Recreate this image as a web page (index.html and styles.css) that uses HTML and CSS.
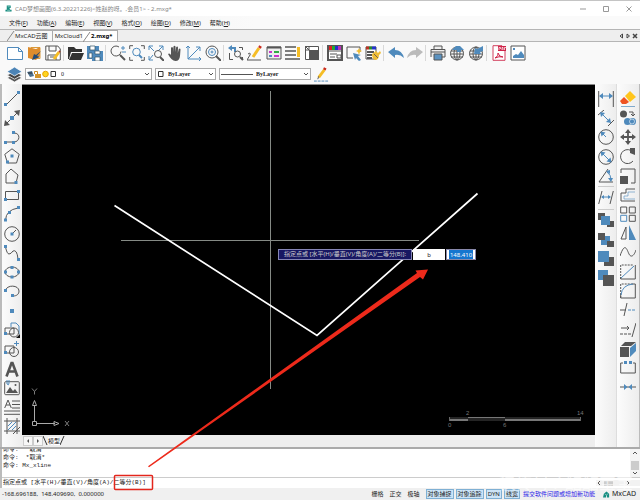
FILE: index.html
```html
<!DOCTYPE html>
<html lang="zh-CN">
<head>
<meta charset="utf-8">
<title>CAD梦想画图</title>
<link rel="stylesheet" href="styles.css">
</head>
<body>
<header class="titlebar">
  <svg class="logo" viewBox="0 0 16 16"><path class="tf" d="M4 1h9v6h-3l2 4h3v4H1v-4h3z"/><path class="w" d="M6 4h5M5 12h7"/></svg>
  <h1>CAD梦想画图(6.3.20221226)&lt;姓赵的呀。,会员1&gt; - 2.mxg*</h1>
  <div class="window-buttons">
    <button aria-label="最小化"><svg viewBox="0 0 8 8"><path d="M1 4h6"/></svg></button>
    <button aria-label="最大化"><svg viewBox="0 0 8 8"><path d="M1.5 1.5h5v5h-5z"/></svg></button>
    <button aria-label="关闭"><svg viewBox="0 0 8 8"><path d="M1.5 1.5l5 5M6.500 1.500l-5 5"/></svg></button>
  </div>
</header>
<nav class="menubar">
  <button>文件(<u>F</u>)</button><button>功能(<u>A</u>)</button><button>编辑(<u>E</u>)</button><button>视图(<u>V</u>)</button><button>格式(<u>O</u>)</button><button>绘图(<u>D</u>)</button><button>修改(<u>M</u>)</button><button>帮助(<u>H</u>)</button>
</nav>
<div class="doc-tabs">
  <svg class="slant" viewBox="0 0 8 11"><path d="M0 11L7 1"/></svg>
  <button class="doc-tab">MxCAD云图</button>
  <button class="doc-tab second">MxCloud1</button>
  <button class="doc-tab active"><svg class="slant" viewBox="0 0 8 11"><path d="M0 11L7 1"/></svg>2.mxg*</button>
  <div class="tab-nav">
    <button aria-label="向左"><svg viewBox="0 0 6 6"><path d="M4.500 1v4L2 3z"/></svg></button>
    <button aria-label="向右"><svg viewBox="0 0 6 6"><path d="M2 1v4l2.500-2z"/></svg></button>
    <button aria-label="关闭标签"><svg viewBox="0 0 6 6"><path class="heavy" d="M1 1l4 4M5 1L1 5"/></svg></button>
  </div>
</div>
<div class="toolbar main-tools">
  <button aria-label="新建"><svg viewBox="0 0 16 16"><path class="b" fill="#fff" d="M.5 2.500h11l4 4v8H.5zM11.500 2.500v4h4"/></svg></button>
  <button aria-label="打开图纸"><svg viewBox="0 0 16 16"><path fill="#fff" stroke="#d99a3a" d="M5 2.500h9v11H5z"/><path class="of" d="M2 2l8 2v11l-8-2zM10 4l4-2v9l-4 4z"/><path class="nf" d="M15 6l-4 5 3 1-8 3 2-6 2 1z"/></svg></button>
  <button aria-label="保存"><svg viewBox="0 0 16 16"><path fill="#fff" d="M.8 1h12l2.500 3v11H.8zM4 1v5h7V1M3 15v-5h8v5M5 12h4"/><path class="yl" d="M9 14l5-7"/><path stroke="#b93b24" stroke-width="2" d="M14 7l1-1"/></svg></button>
  <i class="sep"></i>
  <button aria-label="打开"><svg viewBox="0 0 16 16"><path class="kf" d="M0 2h6l2 2h6v3H3l-2 7H0zM4 8h12l-3 7H1z"/></svg></button>
  <button aria-label="另存为"><svg viewBox="0 0 16 16"><path class="bf" d="M0 1h12v13H0zM5 6h11v10H5z"/><path fill="#fff" d="M3 1h5v4H3zM2 8h3v5H2zM8 6h5v3H8zM8 12h5v4H8z" stroke="#356" stroke-width=".7"/></svg></button>
  <i class="sep"></i>
  <button aria-label="实时缩放"><svg viewBox="0 0 16 16"><path d="M9 2A5 5 0 1 0 11 6.500"/><path class="hv" d="M10 10l5 5"/><path class="b" d="M11 3h4M13 1v4M12 7h4"/></svg></button>
  <button aria-label="窗口缩放"><svg viewBox="0 0 16 16"><path d="M.7 4V.7H4M12 .7h3.300V4M.7 12v3.300H4M12 15.300h3.300V12"/><circle class="b" cx="7.500" cy="7" r="3.800"/><path class="b hv" d="M10 10l3 3"/></svg></button>
  <button aria-label="范围缩放"><svg viewBox="0 0 16 16"><path class="b" d="M6 6L1 1M1 5V1h4M10 6l5-5M11 1h4v4M5 10l-4 5M1 11v4h4"/><circle cx="10" cy="9" r="3.500"/><path class="hv" d="M12 12l4 4"/></svg></button>
  <button aria-label="平移"><svg viewBox="0 0 16 16"><path fill="#555" stroke="none" d="M4 8V3q1-2 2 0v4l.5-5.500q1-1.500 2 0V7l.7-5q1.500-1 1.800.5L10.800 8l1-4q1.500-1 1.700.6L13 11q-.5 5-4.500 5T1 9q1.500-1.500 3 1z"/></svg></button>
  <button aria-label="坐标系"><svg viewBox="0 0 16 16"><path class="b" d="M2 1v13h13M2 14L14 2M0 3l2-2 2 2M13 12l2 2-2 2M10 2h4v4"/></svg></button>
  <button aria-label="全图缩放"><svg viewBox="0 0 16 16"><circle cx="7" cy="7" r="6"/><circle class="b" cx="7" cy="7" r="3.500"/><circle class="b" cx="7" cy="7" r="1"/><path class="hv" d="M11 11l5 5"/></svg></button>
  <i class="sep"></i>
  <button aria-label="返回缩放"><svg viewBox="0 0 16 16"><path class="bf" d="M0 3l4-3v2h4v5H6V4H4v2z"/><path d="M1.500 8v6.500H5M11 2.500h3.500V5M14.500 12v3"/><circle cx="9.500" cy="9" r="3"/><path class="hv" d="M12 12l3 3"/></svg></button>
  <button aria-label="编辑"><svg viewBox="0 0 16 16"><path d="M1 9q3-2 2 1l-3 5h14"/><path class="yl" d="M6 12l6-9"/><path class="rd" d="M12.500 3l1-2"/></svg></button>
  <button aria-label="属性"><svg viewBox="0 0 16 16"><path fill="#eee" d="M1 2h14v12H1z"/><path class="hv" d="M1 2.500h14"/><path stroke="#c3c" stroke-width="2" d="M3 7h3"/><path class="b hv" d="M3 11h3"/><path stroke="#3a4" stroke-width="2" d="M8 7h5"/><path stroke="#c3c" stroke-width="2" d="M8 11h5"/></svg></button>
  <button aria-label="图层列表"><svg viewBox="0 0 16 16"><path stroke-width="1.600" d="M0 2h11M0 6h11M0 10h11M0 14h15"/><path class="yl" d="M13.500 2v10"/></svg></button>
  <button aria-label="块"><svg viewBox="0 0 16 16"><path fill="#fff" d="M1.500 1.500h13v13h-13z"/><path class="df" d="M5 5h10v10H5z"/><path d="M1 1l4 4M5 1v4M1 5h4"/></svg></button>
  <i class="sep"></i>
  <button aria-label="颜色表"><svg viewBox="0 0 16 16"><path fill="#fff" class="hv" d="M1 1h14v14H1z"/><path stroke="#d22" stroke-width="4" d="M2 3h3"/><path stroke="#2a3" stroke-width="4" d="M5 3h3"/><path stroke="#23c" stroke-width="4" d="M8 3h3"/><path stroke="#b3b" stroke-width="4" d="M11 3h3"/><path d="M1 6h14M3 9h7M3 12h5M10 10h4v3h-4z"/></svg></button>
  <button aria-label="快速选择"><svg viewBox="0 0 16 16"><path d="M7 13H1V2h13v5"/><path class="bf" d="M7 8l8 2-3 1 3 4-2 1-3-3-1 2z"/><path class="yf" d="M13 3l1 2 2 1-2 1-1 3-1-3-2-1 2-1z"/></svg></button>
  <button aria-label="格式刷"><svg viewBox="0 0 16 16"><path fill="#fff" d="M1 2h10v12H1z"/><path stroke="#b32" stroke-width="3" d="M1 3h3"/><path stroke="#283" stroke-width="3" d="M4 3h3"/><path stroke="#23c" stroke-width="3" d="M7 3h4"/><path class="hv" d="M2 7h7M2 10h5M2 13h5"/><path class="yf" d="M7 9l4-3 2 2 2-2 1 2-2 2q0 5-4 5-3-1-3-6z"/><path stroke="#765" d="M9 9l4 4"/></svg></button>
  <i class="sep"></i>
  <button aria-label="撤销"><svg viewBox="0 0 16 16"><path class="bf" d="M0 7l7-5v3q7 0 9 8-4-4-9-3v3z"/></svg></button>
  <button aria-label="重做"><svg viewBox="0 0 16 16"><path fill="#bbb" stroke="none" d="M16 7L9 2v3q-7 0-9 8 4-4 9-3v3z"/></svg></button>
  <i class="sep"></i>
  <button aria-label="打印"><svg viewBox="0 0 16 16"><path fill="#eee" d="M4 4V1h8v3M1 12V4.500h14V12h-3M1 7h14"/><path fill="#5b92c0" d="M4 9h8v6H4z"/></svg></button>
  <button aria-label="上传"><svg viewBox="0 0 16 16"><circle cx="8" cy="8.500" r="6.500"/><ellipse cx="8" cy="8.500" rx="3" ry="6.500"/><path d="M8 2v13M2 6h12M1.500 9h13M2 12h12"/><path class="bf" d="M3 5l4-4h4l4 4h-3v2H8V5z"/></svg></button>
  <button aria-label="网络下载"><svg viewBox="0 0 16 16"><circle cx="8" cy="8.500" r="6.500"/><ellipse cx="8" cy="8.500" rx="3" ry="6.500"/><path d="M8 2v13M2 6h12M1.500 9h13M2 12h12"/><path class="bf" d="M15 1v5l-3 1 1 2H6l1-6 2 1z"/></svg></button>
  <i class="sep"></i>
  <button aria-label="导出 PDF"><svg viewBox="0 0 16 16"><path fill="#fff" stroke="#d2405e" d="M2 .7h9l3 3v11.600H2z"/><path fill="#cf2248" stroke="none" d="M7 1h8v5H7z"/><path stroke="#fff" stroke-width=".7" d="M8 5V2.500h1.500V4M11 5V2.500h1V5M13.500 5V2.500H15"/><path stroke="#cf2248" d="M4 13q4-2 3-5 1 4 5 4-4-1-8 1"/></svg></button>
  <button aria-label="导出图片"><svg viewBox="0 0 16 16"><path fill="#fff" d="M1 1h14v14H1z"/><path class="bf" d="M3 13v-2l3-2 2 1 3-4 3 4v3zM3 3h2v2H3z"/></svg></button>
</div>
<div class="toolbar layer-tools">
  <button class="layers" aria-label="图层"><svg viewBox="0 0 16 16"><path fill="#555" stroke="#fff" stroke-width=".8" d="M0 11.500L8 8l8 3.500L8 16z"/><path fill="#444" stroke="#fff" stroke-width=".8" d="M0 8.500L8 5l8 3.500L8 13z"/><path fill="#4c84b6" stroke="#fff" stroke-width=".8" d="M0 5l8-5 8 5-8 4.500z"/></svg></button>
  <div class="combo layer-combo">
    <svg class="states" viewBox="0 0 30 8"><path fill="#4d7393" stroke="none" d="M0 2l5-1 2 5-4 1z"/><path stroke="#333" d="M1 3h4"/><path fill="#d5962c" stroke="none" d="M8 4h6v4H8z"/><path stroke="#c98b25" d="M7.500 4V1.500h3V4"/><circle cx="18.500" cy="4" r="2.800" fill="#ffd51e" stroke="#e9a500"/><path fill="#fff" stroke="#333" d="M24 1.500h4.500v5H24z"/></svg>
    <select aria-label="图层"><option>0</option></select>
    <svg class="chev" viewBox="0 0 6 6"><path d="M1 2l2 2 2-2"/></svg>
  </div>
  <div class="combo color-combo">
    <svg class="swatch" viewBox="0 0 8 8"><path fill="#fff" stroke="#333" d="M1.500 1.500h4.500v5H1.500z"/></svg>
    <select aria-label="颜色"><option>ByLayer</option></select>
    <svg class="chev" viewBox="0 0 6 6"><path d="M1 2l2 2 2-2"/></svg>
  </div>
  <div class="combo line-combo">
    <span class="sample"></span>
    <select aria-label="线型"><option>ByLayer</option></select>
    <svg class="chev" viewBox="0 0 6 6"><path d="M1 2l2 2 2-2"/></svg>
  </div>
  <button aria-label="线型编辑"><svg viewBox="0 0 16 16"><path class="yl" d="M5 11l6-8"/><path class="rd" d="M11 3l1-2"/><path d="M4 13l1-3"/><path class="b" stroke-dasharray="3 1" d="M0 15h16"/></svg></button>
</div>
<main class="work">
  <div class="side draw-tools">
    <button aria-label="直线"><svg viewBox="0 0 16 16"><path d="M2 14L14 2"/><path class="bf" d="M0 12h3v3H0zM13 0h3v3h-3z"/></svg></button>
    <button aria-label="构造线"><svg viewBox="0 0 16 16"><path d="M2 14L14 2"/><path class="df" d="M0 16l1-6 5 5zM16 0l-6 1 5 5z"/><path class="bf" d="M6 6h4v4H6z"/></svg></button>
    <button aria-label="多段线"><svg viewBox="0 0 16 16"><path d="M1 13h9c6 0 7-9 0-9"/><path class="bf" d="M0 12h3v3H0zM8 12h3v3H8zM8 2h3v3H8z"/></svg></button>
    <button aria-label="正多边形"><svg viewBox="0 0 16 16"><path d="M8 .8l7.200 5.500L12.500 15h-9L.8 6.300z"/><path class="bf" d="M6.500 6.500h3v3h-3zM2 12.500h3v3H2z"/></svg></button>
    <button aria-label="多边形"><svg viewBox="0 0 16 16"><path d="M2 15V6l5-5 7 6-2 8z"/><path class="bf" d="M10.500 13h3v3h-3z"/></svg></button>
    <button aria-label="矩形"><svg viewBox="0 0 16 16"><path d="M1.500 4.500h13v8h-13z"/><path class="bf" d="M0 11h3v3H0zM13 3h3v3h-3z"/></svg></button>
    <button aria-label="圆弧"><svg viewBox="0 0 16 16"><path d="M1.500 14Q2 4 14 2"/><path class="bf" d="M0 12.500h3v3H0zM13 0h3v3h-3zM4 5h3v3H4z"/></svg></button>
    <button aria-label="圆"><svg viewBox="0 0 16 16"><circle cx="8" cy="8" r="7.300"/><path d="M8 8l4-4"/><path class="bf" d="M6.500 6.500h3v3h-3z"/></svg></button>
    <button aria-label="样条曲线"><svg viewBox="0 0 16 16"><path d="M1.500 2Q3 9 5 9t4-3q4-2 5 8"/><path class="bf" d="M0 0h3v3H0zM13 13h3v3h-3z"/></svg></button>
    <button aria-label="椭圆"><svg viewBox="0 0 16 16"><ellipse cx="8" cy="8" rx="7" ry="5"/><path class="bf" d="M0 6.500h3v3H0zM13 6.500h3v3h-3zM6.500 2h3v3h-3zM6.500 11.500h3v3h-3z"/></svg></button>
    <button aria-label="椭圆弧"><svg viewBox="0 0 16 16"><path d="M1 8c2-7 14-6 14 0 0 3-2 5-6 5"/><path class="bf" d="M0 6h3v3H0zM7 11h3v3H7z"/></svg></button>
    <button aria-label="点"><svg viewBox="0 0 16 16"><path class="bf" d="M6 6h4v4H6z"/></svg></button>
    <button aria-label="创建块"><svg viewBox="0 0 16 16"><path class="b" d="M7 5V1h5l3 3v8"/><path d="M1 6h9v6H1z"/><circle cx="10" cy="10.500" r="4.500"/><path class="bf" d="M0 10h3v3H0z"/><path fill="#111" stroke="none" d="M16 12v4h-4z"/></svg></button>
    <button aria-label="插入块"><svg viewBox="0 0 16 16"><path d="M1 5h9v7H1z"/><circle cx="10" cy="11" r="4.500"/><path class="b" d="M12.500 0v5M10 2.500h5"/><path class="bf" d="M0 10h3v3H0z"/></svg></button>
    <button aria-label="单行文字"><svg viewBox="0 0 16 16"><path stroke-width="2.600" d="M2.500 15.500L7.500 2h1l5 13.500M4.500 10.500h7"/></svg></button>
    <button aria-label="图片"><svg viewBox="0 0 16 16"><rect x=".7" y="1.700" width="14.600" height="13" rx="1"/><path class="df" d="M2 13l4-6 3 4 2-2 3 4z"/><circle class="df" cx="11.500" cy="5" r="1"/><path class="b" d="M3 0v4q2 2 2-1V0"/></svg></button>
    <button aria-label="多行文字"><svg viewBox="0 0 16 16"><path d="M.7 9L4 1l3.300 8M2 6h4M8 2h8M8 5.500h8M8 9h8M0 12h16M0 15.300h16"/></svg></button>
    <button aria-label="图案填充"><svg viewBox="0 0 16 16"><path d="M3 0v16M13 0v16M0 3h16M0 13h16"/><path class="b" d="M4 8l4-4M4 12l8-8M8 12l4-4"/><path d="M9 16l7-7"/></svg></button>
  </div>
  <section class="drawing">
    <div class="canvas">
      <svg class="scene" viewBox="22 85 573 350">
        <path stroke="#858a85" d="M270.500 91v298M121 240.500h298"/>
        <path stroke="#fff" stroke-width="1.700" d="M114.500 205.500L317 335.500 477.500 193.500"/>
        <path stroke="#aaa" d="M32.500 421.500h4v4h-4zM34.500 421V405M37 423.500h18M32.500 405.500l2-5 2 5zM54 421.500l5 2-5 2z"/>
        <path stroke="#999" stroke-width=".8" d="M32 388.500l2.500 3 2.500-3M34.500 391.500v3M65 421l4 5M69 421l-4 5"/>
        <path fill="#242424" stroke="none" d="M449 417h131v4H449z"/>
        <path fill="#777" stroke="none" d="M449 419h19v2h-19zM505 419h75v2h-75zM468 417h37v1h-37z"/>
        <path stroke="#666" d="M449.500 417v4M580.500 417v4"/>
        <g class="scale-text"><text x="466" y="415">2</text><text x="577" y="415">14</text><text x="448" y="427">0</text><text x="503" y="427">6</text></g>
      </svg>
      <div class="dyn">
        <label for="dyn-a">指定点或 [水平(H)/垂直(V)/角度(A)/二等分(B)]:</label>
        <input id="dyn-a" value="b">
        <span class="dyn-b"><input aria-label="坐标值" value="148.410"></span>
      </div>
    </div>
    <div class="model-tabs">
      <button aria-label="上一个"><svg viewBox="0 0 6 6"><path d="M4 1v4L2 3z"/></svg></button>
      <button aria-label="下一个"><svg viewBox="0 0 6 6"><path d="M2 1v4l2-2z"/></svg></button>
      <svg class="edge" viewBox="0 0 5 10"><path d="M0 0l4 9"/></svg>
      <button class="model">模型</button>
      <svg class="edge" viewBox="0 0 5 10"><path d="M4 0L0 9"/></svg>
    </div>
  </section>
  <div class="side dim-tools">
    <button aria-label="线性标注"><svg viewBox="0 0 16 16"><path d="M.7 0v16M15.300 0v16"/><path class="b" d="M2 5h12"/><path class="bf" d="M1 5l4-3v6zM15 5l-4-3v6z"/></svg></button>
    <button aria-label="对齐标注"><svg viewBox="0 0 16 16"><path d="M0 5l6-5M10 16l6-6"/><path class="b" d="M4 4l8 8"/><path class="bf" d="M2 2l5 1-4 4zM13 13l-5-1 4-4z"/></svg></button>
    <button aria-label="半径标注"><svg viewBox="0 0 16 16"><circle cx="8" cy="8" r="7.300"/><path class="b" d="M4 4l4 4"/><path class="bf" d="M2.500 2.500l5 1-4 4z"/></svg></button>
    <button aria-label="直径标注"><svg viewBox="0 0 16 16"><circle cx="8" cy="8" r="7.300"/><path class="b" d="M4 4l8 8"/><path class="bf" d="M2.500 2.500l5 1-4 4zM13.500 13.500l-5-1 4-4z"/></svg></button>
    <button aria-label="角度标注"><svg viewBox="0 0 16 16"><path d="M10 1L1 14h14"/><path class="b" d="M9 4q4 3 4 7"/><path class="bf" d="M8 3l4-1v4zM13 14l-3-4h5z"/></svg></button>
    <i class="rule"></i>
    <button aria-label="倾斜标注"><svg viewBox="0 0 16 16"><path d="M4 1L.7 14M15.300 1L12 14"/><path class="b" d="M4 7h8"/><path class="bf" d="M3 7l3-2v4zM13 7l-3-2v4z"/></svg></button>
    <i class="rule"></i>
    <button aria-label="置于顶层"><svg viewBox="0 0 16 16"><path class="df" d="M0 1h7v7H0zM9 9h7v6H9z"/><path class="bf" d="M3 4h9v9H3z"/></svg></button>
    <button aria-label="置于底层"><svg viewBox="0 0 16 16"><path class="bf" d="M3 4h9v9H3z"/><path class="df" d="M0 1h7v7H0zM9 9h7v6H9z"/></svg></button>
    <button aria-label="前移"><svg viewBox="0 0 16 16"><path class="df" d="M6 6h10v9H6z"/><path class="bf" stroke="#fff" d="M0 0h11v11H0z"/></svg></button>
    <button aria-label="后移"><svg viewBox="0 0 16 16"><path class="bf" d="M0 0h10v10H0z"/><path class="df" stroke="#fff" d="M5 5h11v11H5z"/></svg></button>
  </div>
  <div class="side edit-tools">
    <button aria-label="删除"><svg viewBox="0 0 16 16"><path fill="#ffc51c" stroke="none" d="M10 0l6 6-6 5-5-6z"/><path fill="#ef5423" stroke="none" d="M4 6l5 5-3 2H2L0 10z"/><path class="b" stroke-width=".7" d="M1 15.500h14"/></svg></button>
    <button aria-label="复制"><svg viewBox="0 0 16 16"><circle class="df" cx="3.500" cy="4" r="3.500"/><circle class="bf" cx="7.500" cy="11.500" r="3.500"/><circle class="bf" cx="12.500" cy="11.500" r="3.500"/><circle class="w" cx="12" cy="11.500" r="2.500" stroke-width=".6"/><path d="M9 2h4v4M11 4l2 2 2-2"/></svg></button>
    <button aria-label="移动"><svg viewBox="0 0 16 16"><path stroke-width="1.800" d="M8 2v12M2 8h12"/><path class="df" d="M8 0l3 4H5zM8 16l3-4H5zM0 8l4-3v6zM16 8l-4-3v6z"/></svg></button>
    <button aria-label="旋转"><svg viewBox="0 0 16 16"><path d="M13 13A7 7 0 1 1 11 2.500"/><path class="df" d="M10 0h5v7l-5-2z"/></svg></button>
    <button aria-label="缩放"><svg viewBox="0 0 16 16"><path d="M1 5V1h14v14h-4"/><path class="df" d="M0 8h8v8H0z"/></svg></button>
    <button aria-label="偏移"><svg viewBox="0 0 16 16"><path d="M15 2H6v4H1v8h14"/><path class="b" stroke-width=".6" d="M15 5H8v4H4v3h11"/></svg></button>
    <button aria-label="阵列"><svg viewBox="0 0 16 16"><path d="M.7 1h6v6h-6zM9.300 1h6v6h-6zM9.300 9.300h6v6h-6z"/><path class="b" d="M.7 9.300h6v6h-6z"/></svg></button>
    <button aria-label="镜像"><svg viewBox="0 0 16 16"><path d="M6 2v12H1z"/><path class="bf" d="M9 0v15h7z"/></svg></button>
    <button aria-label="曲线编辑"><svg viewBox="0 0 16 16"><path d="M0 11C5-4 7 5 9 9s5 2 7-4"/></svg></button>
    <button aria-label="倒角"><svg viewBox="0 0 16 16"><path stroke-dasharray="2 1" d="M.7 15V1h13"/><path d="M.7 13v2h14.600V1"/><path class="b" d="M1 14L14 2"/></svg></button>
    <button aria-label="圆角"><svg viewBox="0 0 16 16"><path stroke-dasharray="2 1" d="M.7 15V1h13"/><path d="M.7 11v4h14.600V1h-3"/><path class="b" d="M1 12Q2 2 13 1"/></svg></button>
    <button aria-label="修剪"><svg viewBox="0 0 16 16"><path d="M0 8h6M7 1L4 14"/><path class="b" stroke-dasharray="3 1" d="M8 8h8"/></svg></button>
    <button aria-label="延伸"><svg viewBox="0 0 16 16"><path d="M1 6h8M7 4l2 2-2 2M16 1l-4 14"/><path stroke-dasharray="3 1" d="M0 12h11"/></svg></button>
    <button aria-label="拉伸"><svg viewBox="0 0 16 16"><path class="df" d="M0 6h9v10H0zM1 5l4-4h11l-5 4z"/><path class="bf" d="M10 7l6-5v8l-6 6z"/></svg></button>
    <button aria-label="打断"><svg viewBox="0 0 16 16"><path d="M3 3H.7v10h14.600V3H13"/><path class="bf" d="M4 1h3v3H4zM9 1h3v3H9z"/></svg></button>
    <button aria-label="合并"><svg viewBox="0 0 16 16"><path d="M0 8h16"/><path class="bf" d="M7.500 8L4 5v6zM8.500 8L12 5v6z"/></svg></button>
  </div>
</main>
<section class="console">
  <div class="log">
    <div class="log-text"><p>命令:  *取消*</p><p>命令:  *取消*</p><p>命令: Mx_xline</p></div>
    <div class="vscroll"><svg viewBox="0 0 6 6"><path d="M1 4l2-2 2 2"/></svg><i></i><svg viewBox="0 0 6 6"><path d="M1 2l2 2 2-2"/></svg></div>
  </div>
  <div class="prompt">
    <label for="command">指定点或 [水平(H)/垂直(V)/角度(A)/二等分(B)]</label>
    <input id="command">
    <div class="hscroll"><svg viewBox="0 0 6 6"><path d="M4 1L2 3l2 2"/></svg><i></i><svg viewBox="0 0 6 6"><path d="M2 1l2 2-2 2"/></svg></div>
  </div>
</section>
<footer class="status">
  <span class="coords">-168.696188,&nbsp; 148.409690,&nbsp; 0.000000</span>
  <button>栅格</button><button>正交</button><button>极轴</button>
  <div class="toggles"><button>对象捕捉</button><button>对象追踪</button><button>DYN</button><button>线宽</button></div>
  <a href="#">提交软件问题或增加新功能</a>
  <svg class="logo" viewBox="0 0 16 16"><path class="tf" d="M2 6l6-5 6 5v9H9v-5H7v5H0z"/><path class="w" d="M4 7l4 2 4-3"/></svg>
  <span class="brand">MxCAD</span>
</footer>
<div class="watermark">快传号 / 酷酷宝宝</div>
<svg class="annotation" viewBox="0 0 640 500" aria-hidden="true">
  <path fill="#ed2a1b" d="M148 466.300L417 273 415.500 270.500 428 269.500 423 279.500 420 277 149 467.300z"/>
  <rect x="114.500" y="475.500" width="38" height="14" rx="1" fill="none" stroke="#e3261c" stroke-width="1.500"/>
</svg>
</body>
</html>
```
FILE: styles.css
```css
* { box-sizing: border-box; }

body {
  margin: 0;
  min-height: 100vh;
  display: flex;
  flex-direction: column;
  position: relative;
  overflow: hidden;
  background: #f9f9f9;
  border-top: 1px solid #c4c4c4;
  color: #222;
  font: 6px/8px "Noto Sans", "Noto Sans CJK SC", sans-serif;
}

button, input, select {
  margin: 0;
  padding: 0;
  border: 0;
  background: none;
  color: inherit;
  font: inherit;
}

svg { display: block; fill: none; stroke: #555; stroke-width: 1; }
h1, p { margin: 0; font: inherit; }

.b { stroke: #4f8abc; }
.bf { fill: #4f8abc; stroke: none; }
.df { fill: #555; stroke: none; }
.kf { fill: #333; stroke: none; }
.of { fill: #dd8c2c; stroke: none; }
.nf { fill: #244b75; stroke: none; }
.yf { fill: #efbd35; stroke: none; }
.tf { fill: #168d80; stroke: none; }
.w { stroke: #fff; }
.hv { stroke-width: 2; }
.yl { stroke: #f5bd25; stroke-width: 3; }
.rd { stroke: #c9291d; stroke-width: 3; }

.titlebar {
  height: 15px;
  display: flex;
  align-items: center;
  padding: 0 5px;
  gap: 3px;
  background: #fff;
  color: #858585;
}
.logo { width: 7px; height: 7px; }
.window-buttons { margin-left: auto; display: flex; gap: 15px; padding-right: 2px; }
.window-buttons svg { width: 8px; height: 8px; stroke: #999; }

.menubar {
  height: 13px;
  display: flex;
  align-items: center;
  gap: 9px;
  padding-left: 9px;
  background: linear-gradient(90deg, #f1f1f1, #fafafa 40%);
}
.menubar button { white-space: nowrap; }

.doc-tabs {
  height: 13px;
  display: flex;
  align-items: flex-end;
  padding: 0 2px 0 7px;
  border-top: 1px solid #b5b5b5;
  border-bottom: 1px solid #b5b5b5;
  background: #eee;
}
.slant { width: 8px; height: 11px; stroke: #888; }
.doc-tab { height: 11px; padding: 0 4px 0 0; border-top: 1px solid #aaa; border-right: 1px solid #aaa; background: #f8f8f8; }
.doc-tab.second { padding: 0 0 0 2px; border-right: 0; }
.doc-tab.active { display: flex; align-items: center; background: #fff; color: #000; font-weight: bold; }
.tab-nav { display: flex; align-self: center; margin-left: auto; gap: 1px; }
.tab-nav svg { width: 6px; height: 6px; stroke: #444; }
.heavy { stroke-width: 1.5; }

.toolbar { display: flex; align-items: center; }
.toolbar svg { flex: none; }
.main-tools { height: 22px; padding-left: 5px; }
.main-tools button { width: 19px; }
.main-tools button svg { width: 16px; height: 16px; margin: 0 auto; }
.sep { flex: none; width: 1px; height: 16px; margin: 0 2px 0 1px; background: #d8d8d8; }
.layer-tools { height: 20px; padding-left: 7px; gap: 3px; }
.layer-tools button svg { width: 15px; height: 15px; }
.combo {
  height: 12px;
  display: flex;
  align-items: center;
  border: 1px solid #aaa;
  background: #fff;
  font: 6px/8px "Liberation Serif", serif;
}
.combo select { flex: 1; min-width: 0; appearance: none; }
.chev { width: 6px; height: 6px; margin-right: 1px; }
.layer-combo { flex: 0 1 127px; }
.color-combo { flex: 0 1 61px; }
.line-combo { flex: 0 1 92px; }
.color-combo select, .line-combo select { font-weight: bold; }
.states { width: 30px; height: 8px; margin: 0 4px 0 1px; }
.swatch { width: 8px; height: 8px; margin: 0 3px 0 1px; }
.sample { width: 32px; height: 1px; margin: 0 3px 0 1px; background: #555; }

.work { flex: 1; min-height: 0; display: flex; border-bottom: 2px solid #aaa; }
.side {
  flex: none;
  width: 22px;
  display: flex;
  flex-direction: column;
  align-items: center;
  padding-top: 5px;
  background: linear-gradient(90deg, #fcfcfc, #ededed);
}
.side button { flex: 1; min-height: 0; display: flex; align-items: center; }
.side svg { width: 16px; height: 16px; }
.draw-tools { padding-bottom: 11px; border-left: 2px solid #bbb; }
.dim-tools { padding-bottom: 159px; border-right: 1px solid #ddd; }
.edit-tools { width: 23px; padding-bottom: 50px; border-right: 1px solid #bbb; }
.rule { width: 16px; height: 1px; margin: 1px 0; background: #ccc; }

.drawing { flex: 1; min-width: 0; display: flex; flex-direction: column; }
.canvas { flex: 1; min-height: 0; position: relative; background: #000; border-top: 1px solid #888; }
.scene { width: 100%; height: 100%; position: absolute; }
.scale-text { fill: #777; stroke: none; font: 6px "Liberation Sans", sans-serif; }
.dyn { position: absolute; left: 256px; top: 164px; display: flex; gap: 1px; color: #ccc; }
.dyn label { height: 11px; padding: 0 5px; border: 1px solid #8585b5; background: #171762; line-height: 9px; white-space: nowrap; }
.dyn > input { width: 32px; height: 11px; background: #fff; color: #222; text-align: center; }
.dyn-b { display: flex; padding: 0 2px; border: 1px solid #88a; background: #fff; }
.dyn-b input { width: 24px; background: #1676cf; color: #fff; text-align: center; }

.model-tabs { height: 12px; display: flex; align-items: center; background: #eee; padding-left: 1px; }
.model-tabs button svg { width: 6px; height: 6px; fill: #555; stroke: none; }
.model-tabs button:not(.model) { padding: 1px; border: 1px solid #ccc; background: #f7f7f7; }
.model-tabs .edge { width: 5px; height: 10px; stroke: #333; }
.model { background: #fff; color: #111; }

.console { background: #fff; border-left: 2px solid #bbb; font-family: "Liberation Mono", "Noto Sans CJK SC", monospace; }
.log { height: 29px; display: flex; border-bottom: 1px solid #ccc; }
.log-text { flex: 1; display: flex; flex-direction: column; justify-content: flex-end; padding: 0 1px 7px; overflow: hidden; white-space: pre; }
.vscroll { width: 10px; display: flex; flex-direction: column; align-items: center; justify-content: space-between; padding: 1px 0; background: #f4f4f4; }
.vscroll svg, .hscroll svg { width: 6px; height: 6px; }
.vscroll i { width: 8px; height: 9px; margin-top: 4px; background: #ccc; }
.prompt { height: 10px; display: flex; align-items: center; padding-left: 1px; }
.prompt input { flex: 1; min-width: 0; }
.hscroll { display: flex; align-items: center; gap: 2px; width: 44px; background: #f2f2f2; }
.hscroll i { width: 9px; height: 5px; margin-right: 10px; background: #ccc; }

.status { height: 12px; display: flex; align-items: center; padding: 0 4px 0 2px; background: #f0f0f0; white-space: nowrap; }
.coords { margin-right: auto; }
.status > button { margin-right: 6px; }
.toggles { display: flex; gap: 2px; }
.toggles button { height: 10px; padding: 0 1px; border: 1px solid #7fb0d4; background: #cce4f7; }
.status a { margin: 0 8px 0 3px; color: #2a22e8; text-decoration: none; }
.brand { margin-left: 2px; font-size: 7px; }

.watermark { position: absolute; right: 7px; bottom: 8px; color: #fff; opacity: .6; font-size: 17px; line-height: 18px; pointer-events: none; }
.annotation { position: absolute; left: 0; top: -1px; width: 100%; height: 100vh; stroke: none; pointer-events: none; }
```
